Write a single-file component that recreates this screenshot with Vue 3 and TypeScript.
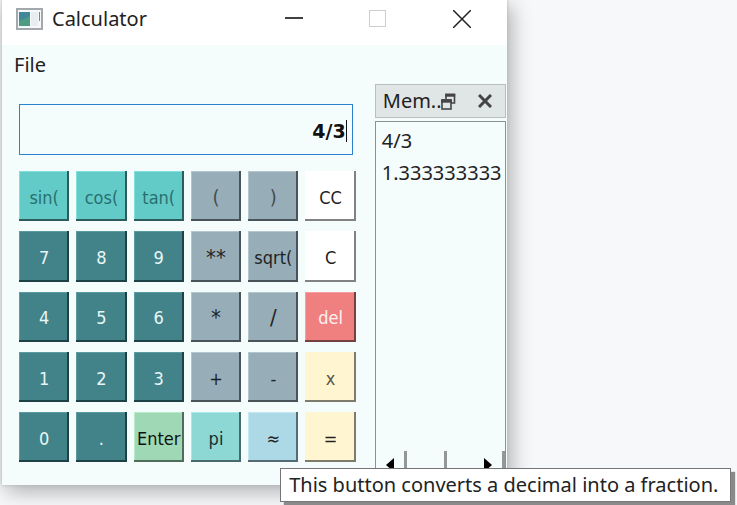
<script setup lang="ts">
import { ref } from 'vue'

interface Key {
  label: string
  tone: string
  tip?: string
}

const entry = ref('4/3')
const memory = ref<string[]>(['4/3', '1.333333333'])

const keys: Key[] = [
  { label: 'sin(', tone: 'trig' },
  { label: 'cos(', tone: 'trig' },
  { label: 'tan(', tone: 'trig' },
  { label: '(', tone: 'operator paren' },
  { label: ')', tone: 'operator paren' },
  { label: 'CC', tone: 'clear' },
  { label: '7', tone: 'digit' },
  { label: '8', tone: 'digit' },
  { label: '9', tone: 'digit' },
  { label: '**', tone: 'operator symbol' },
  { label: 'sqrt(', tone: 'operator' },
  { label: 'C', tone: 'clear' },
  { label: '4', tone: 'digit' },
  { label: '5', tone: 'digit' },
  { label: '6', tone: 'digit' },
  { label: '*', tone: 'operator symbol' },
  { label: '/', tone: 'operator symbol' },
  { label: 'del', tone: 'delete' },
  { label: '1', tone: 'digit' },
  { label: '2', tone: 'digit' },
  { label: '3', tone: 'digit' },
  { label: '+', tone: 'operator' },
  { label: '-', tone: 'operator' },
  { label: 'x', tone: 'cream variable' },
  { label: '0', tone: 'digit' },
  { label: '.', tone: 'digit' },
  { label: 'Enter', tone: 'enter' },
  { label: 'pi', tone: 'constant' },
  { label: '≈', tone: 'convert', tip: 'This button converts a decimal into a fraction.' },
  { label: '=', tone: 'cream' },
]

function press(label: string) {
  if (label === 'C' || label === 'CC') {
    entry.value = ''
    if (label === 'CC') memory.value = []
  } else if (label === 'del') {
    entry.value = entry.value.slice(0, -1)
  } else if (label === 'Enter') {
    memory.value.push(entry.value)
  } else if (label !== '=' && label !== '≈') {
    entry.value += label
  }
}
</script>

<template>
  <div class="desktop">
    <main class="window">
      <header class="titlebar">
        <svg class="app-icon" width="27" height="22" viewBox="0 0 27 22" aria-hidden="true">
          <rect x="1" y="1" width="25" height="20" fill="#f7f8f9" stroke="#a2a8ae" stroke-width="2" />
          <rect x="3" y="4" width="11" height="14" fill="#3f8799" />
          <path d="M3 18V13L14 8V18Z" fill="#4f9c83" />
          <rect x="15" y="4" width="7" height="14" fill="#e9edef" />
          <path d="M23 4h1v9h-1z" fill="#4f9c96" />
        </svg>
        <h1>Calculator</h1>
        <div class="window-controls">
          <button type="button" aria-label="Minimize">
            <svg width="18" height="18" viewBox="0 0 18 18"><path d="M0 8h18" stroke="#111" stroke-width="1.6" /></svg>
          </button>
          <button type="button" aria-label="Maximize" disabled>
            <svg width="18" height="18" viewBox="0 0 18 18"><rect x=".5" y=".5" width="16" height="16" fill="none" stroke="#cfcfcf" /></svg>
          </button>
          <button type="button" aria-label="Close">
            <svg width="18" height="18" viewBox="0 0 18 18"><path d="M0 0l18 18M18 0L0 18" stroke="#222" stroke-width="1.5" /></svg>
          </button>
        </div>
      </header>

      <nav class="menubar"><button type="button">File</button></nav>

      <div class="body">
        <section class="calculator">
          <div class="display">
            <input v-model="entry" type="text" aria-label="Expression" />
            <span class="caret"></span>
          </div>
          <div class="keypad">
            <div v-for="key in keys" :key="key.label" class="cell">
              <button
                type="button"
                class="key"
                :class="key.tone"
                :aria-describedby="key.tip ? 'convert-tip' : undefined"
                @click="press(key.label)"
              >{{ key.label }}</button>
              <div v-if="key.tip" id="convert-tip" class="tooltip" role="tooltip">{{ key.tip }}</div>
            </div>
          </div>
        </section>

        <aside class="memory">
          <div class="dock-title">
            <h2>Mem...</h2>
            <button type="button" class="float" aria-label="Float panel">
              <svg width="15" height="17" viewBox="0 0 15 17">
                <path d="M5 6V1.5h8.5v8.5H10" fill="none" stroke="#444" stroke-width="1.6" />
                <path d="M4.2 2.2h10" stroke="#444" stroke-width="3" />
                <rect x="1" y="7" width="9" height="9" fill="#e0e6e6" stroke="#444" stroke-width="1.6" />
                <path d="M.2 8h10.6" stroke="#444" stroke-width="3.4" />
              </svg>
            </button>
            <button type="button" class="dismiss" aria-label="Close panel">
              <svg width="14" height="14" viewBox="0 0 14 14"><path d="M1 1l12 12M13 1L1 13" stroke="#444" stroke-width="3" /></svg>
            </button>
          </div>
          <div class="history">
            <ul>
              <li v-for="(item, i) in memory" :key="i">{{ item }}</li>
            </ul>
            <div class="scrollbar">
              <button type="button" aria-label="Scroll left">
                <svg width="8" height="14" viewBox="0 0 8 14"><path d="M8 0v14L0 7z" fill="#000" /></svg>
              </button>
              <span class="thumb"></span>
              <span class="track"></span>
              <button type="button" aria-label="Scroll right">
                <svg width="8" height="14" viewBox="0 0 8 14"><path d="M0 0v14l8-7z" fill="#000" /></svg>
              </button>
            </div>
          </div>
        </aside>
      </div>
    </main>
  </div>
</template>

<style>
body {
  margin: 0;
  background: #f7f8fa;
}
</style>

<style scoped>
* {
  box-sizing: border-box;
}

.desktop {
  display: grid;
  grid-template-columns: 11fr 5fr;
  min-height: 100vh;
  padding: 0 0 20px 2px;
  overflow: hidden;
  color: #222;
  font-family: "Noto Sans", "Open Sans", sans-serif;
  font-size: 20px;
  line-height: 32px;
}

.window {
  display: flex;
  flex-direction: column;
  background: #f5fcfc;
  box-shadow: 0 0 3px #b4b6b9, 4px 6px 20px #00000050;
}

button {
  padding: 0;
  border: 0;
  background: none;
  color: inherit;
  font: inherit;
}

button svg {
  display: block;
}

h1,
h2 {
  margin: 0;
  font-size: inherit;
  font-weight: 400;
}

.titlebar {
  display: flex;
  align-items: center;
  height: 45px;
  padding: 0 36px 8px 14px;
  background: #fff;
}

.titlebar h1 {
  margin-left: 9px;
}

.window-controls {
  display: flex;
  gap: 66px;
  margin-left: auto;
}

.menubar {
  height: 39px;
  padding: 4px 12px;
}

.body {
  display: flex;
  flex: 1;
  gap: 19px;
  padding: 0 1px 0 17px;
}

.calculator {
  flex: 1;
  padding-top: 20px;
}

.display {
  display: flex;
  align-items: center;
  height: 51px;
  margin: 0 3px 16px 0;
  padding: 2px 5px 0 0;
  border: 1px solid #2a83cf;
}

.display input {
  flex: 1;
  min-width: 0;
  padding: 0;
  border: 0;
  outline: 0;
  background: none;
  color: #111;
  font: bold 19px "DejaVu Sans", sans-serif;
  text-align: right;
}

.caret {
  width: 1px;
  height: 22px;
  background: #111;
}

.keypad {
  display: grid;
  grid-template-columns: repeat(6, 1fr);
  gap: 10px 7px;
}

.cell {
  position: relative;
  min-width: 0;
  aspect-ratio: 1;
}

.key {
  width: 100%;
  height: 100%;
  padding-top: 2px;
  font: 18px "DejaVu Sans Condensed", "DejaVu Sans", sans-serif;
  white-space: nowrap;
}

.trig {
  background: #62cbc8;
  color: #28706e;
  box-shadow: inset -2px -2px #2c5d5c, inset 1px 1px #7fe0dc;
}

.digit {
  background: #42838a;
  color: #e8f6f6;
  box-shadow: inset -2px -2px #1e4146, inset 1px 1px #5a9ba0;
}

.operator {
  background: #97aeb8;
  color: #1c2326;
  box-shadow: inset -2px -2px #485459, inset 1px 1px #b3c6ce;
}

.symbol {
  font-size: 22px;
}

.paren {
  color: #414d52;
  font-size: 20px;
}

.clear {
  background: #fff;
  color: #222;
  box-shadow: inset -2px -2px #828282;
}

.delete {
  background: #f08080;
  color: #fff0f0;
  box-shadow: inset -2px -2px #754040, inset 1px 1px #f7a0a0;
}

.cream {
  background: #fff5d0;
  color: #222;
  box-shadow: inset -2px -2px #7e7b6c;
}

.variable {
  color: #5b5648;
}

.enter {
  background: #9fd8b4;
  color: #111;
  box-shadow: inset -2px -2px #506d5b, inset 1px 1px #b7ebca;
}

.constant {
  background: #8dd7d4;
  color: #15302f;
  box-shadow: inset -2px -2px #466b6a, inset 1px 1px #a8eae7;
}

.convert {
  background: #add8e6;
  color: #222;
  box-shadow: inset -2px -2px #566c74, inset 1px 1px #c5e7f2;
}

.tooltip {
  position: absolute;
  z-index: 1;
  top: 56px;
  left: 32px;
  padding: 0 12px 0 8px;
  border: 1px solid #767676;
  background: #fff;
  box-shadow: 4px 4px 1px #8a8a8a;
  white-space: nowrap;
}

.memory {
  display: flex;
  flex: none;
  flex-direction: column;
  gap: 3px;
  width: 27%;
  padding-bottom: 5px;
}

.dock-title {
  display: flex;
  align-items: center;
  height: 34px;
  padding: 0 13px 0 7px;
  border: 1px solid #b9bebe;
  background: #e0e6e6;
}

.dock-title h2 {
  width: 58px;
  white-space: nowrap;
}

.float {
  z-index: 1;
}

.dismiss {
  margin-left: auto;
}

.history {
  display: flex;
  flex: 1;
  flex-direction: column;
  justify-content: space-between;
  border: 1px solid #8b9293;
}

.history ul {
  margin: 0;
  padding: 3px 0 0 6px;
  list-style: none;
}

.scrollbar {
  display: flex;
  height: 28px;
}

.scrollbar button {
  display: flex;
  flex: 3;
  align-items: center;
  justify-content: center;
  border-right: 3px solid #939797;
}

.thumb {
  flex: 4;
  border-right: 3px solid #939797;
}

.track {
  flex: 3;
}
</style>
